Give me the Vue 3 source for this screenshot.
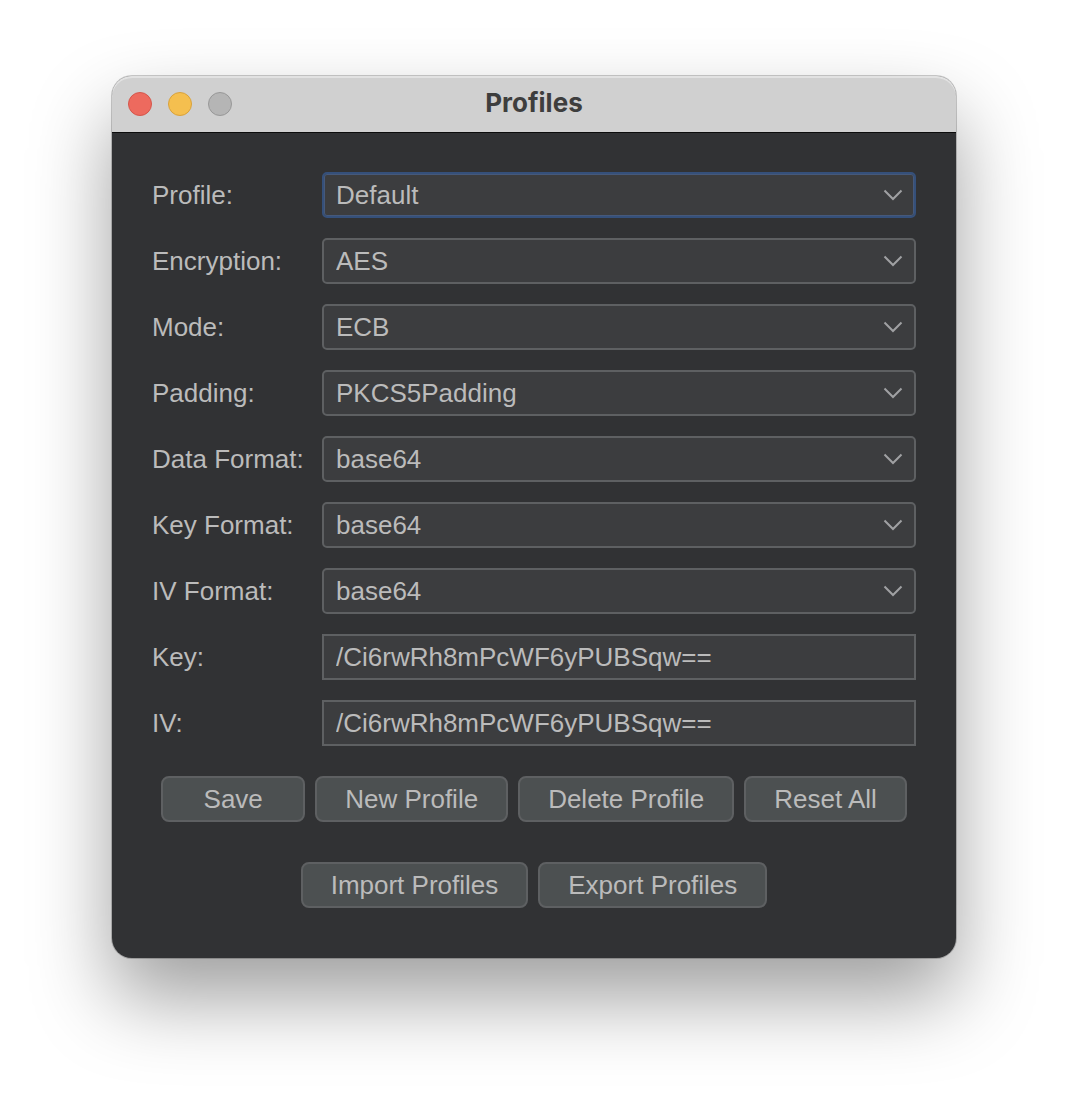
<script setup>
import { ref, reactive } from 'vue'

const lights = [
  { color: 'red', label: 'Close' },
  { color: 'yellow', label: 'Minimize' },
  { color: 'gray', label: 'Zoom' }
]
const selects = reactive([
  { id: 'profile', label: 'Profile:', value: 'Default', options: ['Default'] },
  { id: 'encryption', label: 'Encryption:', value: 'AES', options: ['AES'] },
  { id: 'mode', label: 'Mode:', value: 'ECB', options: ['ECB'] },
  { id: 'padding', label: 'Padding:', value: 'PKCS5Padding', options: ['PKCS5Padding'] },
  { id: 'data-format', label: 'Data Format:', value: 'base64', options: ['base64'] },
  { id: 'key-format', label: 'Key Format:', value: 'base64', options: ['base64'] },
  { id: 'iv-format', label: 'IV Format:', value: 'base64', options: ['base64'] }
])
const key = ref('/Ci6rwRh8mPcWF6yPUBSqw==')
const iv = ref('/Ci6rwRh8mPcWF6yPUBSqw==')
</script>

<template>
  <main class="desktop">
    <section class="window">
      <header class="titlebar">
        <div class="lights">
          <button v-for="l in lights" :key="l.color" type="button" class="light" :class="l.color" :aria-label="l.label"></button>
        </div>
        <h1>Profiles</h1>
      </header>
      <form class="body" @submit.prevent>
        <div class="fields">
          <template v-for="s in selects" :key="s.id">
            <label :for="s.id">{{ s.label }}</label>
            <div class="combo" :class="{ active: s.id === 'profile' }">
              <select :id="s.id" v-model="s.value">
                <option v-for="o in s.options" :key="o">{{ o }}</option>
              </select>
              <svg class="chevron" viewBox="0 0 20 12" aria-hidden="true"><path d="M1.500 1.500 10 10l8.500-8.500" /></svg>
            </div>
          </template>
          <label for="key">Key:</label>
          <input id="key" v-model="key" type="text" spellcheck="false" />
          <label for="iv">IV:</label>
          <input id="iv" v-model="iv" type="text" spellcheck="false" />
        </div>
        <div class="actions">
          <button type="button" class="save">Save</button>
          <button type="button">New Profile</button>
          <button type="button">Delete Profile</button>
          <button type="button">Reset All</button>
        </div>
        <div class="actions transfer">
          <button type="button">Import Profiles</button>
          <button type="button">Export Profiles</button>
        </div>
      </form>
    </section>
  </main>
</template>

<style>
body { margin: 0; background: #fff; }
</style>

<style scoped>
* { box-sizing: border-box; }
.desktop {
  min-height: 100vh;
  padding: 76px 112px 148px;
  overflow: hidden;
  font-family: "Liberation Sans", Arial, sans-serif;
  font-size: 26px;
  line-height: 30px;
  color: #bbb;
}
.window {
  background: #313234;
  border-radius: 20px;
  box-shadow: 0 0 0 1px rgba(0, 0, 0, 0.2), 0 40px 80px rgba(0, 0, 0, 0.38);
}
.titlebar {
  display: grid;
  grid-template-columns: 1fr auto 1fr;
  align-items: center;
  height: 57px;
  padding: 0 16px;
  background: #d0d0d0;
  border-bottom: 1px solid #0c0c0c;
  border-radius: 20px 20px 0 0;
  box-shadow: inset 0 2px 0 #e2e2e2;
}
.lights { display: flex; gap: 16px; }
.light { width: 24px; height: 24px; padding: 0; border: 1px solid; border-radius: 50%; }
.red { background: #ed6a5e; border-color: #d5564b; }
.yellow { background: #f5bf4f; border-color: #d9a23c; }
.gray { background: #b5b5b5; border-color: #989898; }
h1 {
  margin: 0;
  padding-bottom: 2px;
  font: 700 26px/30px Inter, sans-serif;
  color: #3e3e3e;
}
.body { padding: 39px 40px 50px; }
.fields {
  display: grid;
  grid-template-columns: 150px 1fr;
  gap: 20px;
  align-items: center;
}
label { white-space: nowrap; }
.combo { position: relative; height: 46px; }
select, input {
  display: block;
  width: 100%;
  height: 46px;
  margin: 0;
  padding: 0 12px;
  border: 2px solid #5e6062;
  border-radius: 0;
  background: #3c3d3f;
  color: #bbb;
  font: inherit;
  outline: none;
  appearance: none;
}
select { border-radius: 5px; }
.active select {
  border-color: #35507a;
  box-shadow: inset 0 0 0 1px #46597a;
}
.chevron {
  position: absolute;
  top: 17px;
  right: 13px;
  width: 20px;
  height: 12px;
  fill: none;
  stroke: #a0a1a3;
  stroke-width: 2;
  pointer-events: none;
}
.actions { display: flex; justify-content: center; gap: 10px; margin-top: 30px; }
.transfer { margin-top: 40px; }
.actions button {
  height: 46px;
  padding: 0 28px;
  border: 2px solid #5e6062;
  border-radius: 8px;
  background: #4c5051;
  color: #bbb;
  font: inherit;
  white-space: nowrap;
}
.actions .save { width: 144px; }
</style>
